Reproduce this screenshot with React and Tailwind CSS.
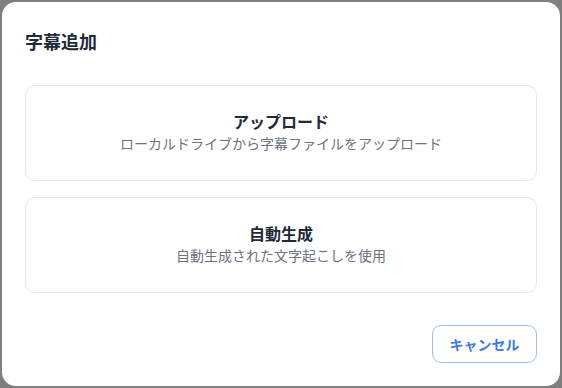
import React from "react";

export default function App() {
  return (
    <div
      className="w-[562px] h-[388px] bg-[#7f7f7f] p-[2px] overflow-hidden"
      style={{ fontFamily: '"Noto Sans", "Noto Sans CJK JP", sans-serif' }}
    >
      <div className="w-[558px] h-[384px] bg-white rounded-[14px] px-[23px] pt-[27px] flex flex-col">
        <h2 className="text-[18px] leading-[26px] font-bold text-[#1f2937]">字幕追加</h2>
        <div className="mt-[30px] flex flex-col gap-[16px]">
          <button className="h-[96px] w-full rounded-[10px] border border-[#e5e7eb] bg-white flex flex-col items-center justify-center">
            <span className="text-[16px] leading-[22px] font-bold text-[#1f2937]">アップロード</span>
            <span className="text-[14px] leading-[22px] text-[#6b7280]">ローカルドライブから字幕ファイルをアップロード</span>
          </button>
          <button className="h-[96px] w-full rounded-[10px] border border-[#e5e7eb] bg-white flex flex-col items-center justify-center">
            <span className="text-[16px] leading-[22px] font-bold text-[#1f2937]">自動生成</span>
            <span className="text-[14px] leading-[22px] text-[#6b7280]">自動生成された文字起こしを使用</span>
          </button>
        </div>
        <div className="mt-[32px] flex justify-end">
          <button className="h-[38px] w-[105px] rounded-[9px] border border-[#9dbcf7] text-[14px] font-bold text-[#3b7be8] flex items-center justify-center">
            キャンセル
          </button>
        </div>
      </div>
    </div>
  );
}
